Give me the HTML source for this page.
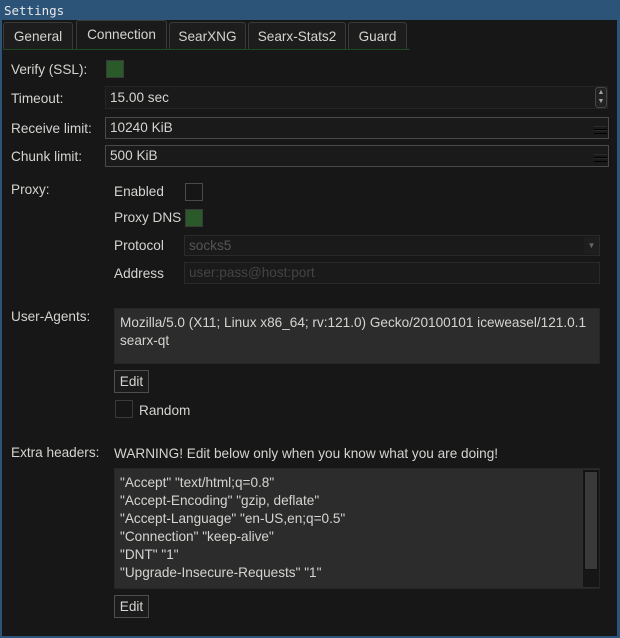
<!DOCTYPE html>
<html><head><meta charset="utf-8"><style>
*{box-sizing:border-box;margin:0;padding:0}
body{width:620px;height:638px;background:#2b5478;font-family:"Liberation Sans",sans-serif;font-size:13.6px;color:#d4d4d0;position:relative;overflow:hidden}
.a{position:absolute}
#win{position:absolute;left:2px;top:20px;width:615px;height:616px;background:#171717}
.title{left:4px;top:3px;color:#e8e8e8;font-size:12.5px;font-family:"DejaVu Sans Mono","Liberation Mono",monospace}
.tab{position:absolute;top:22px;height:27px;border:1px solid #3a3a3a;border-bottom:none;background:#1d1d1d;text-align:center;line-height:27px;border-radius:3px 3px 0 0}
.tab.act{top:20px;height:29px;background:#1a1a1a;line-height:28px}
.lbl{position:absolute;line-height:16px}
.cb{position:absolute;width:18px;height:18px;border:1px solid #4a4a4a;background:#161616}
.cb.on{background:#2a5a2a;border-color:#3a3a3a}
.fld{position:absolute;border:1px solid #4a4a4a;background:#1a1a1a;padding-left:4px;line-height:20px}
.btn{position:absolute;width:35px;height:23px;border:1px solid #4e4e4e;background:#1b1b1b;text-align:center;line-height:21px}
.ta{position:absolute;background:#2c2c2c;border:1px solid #262626}
.stub{position:absolute;width:13px;height:4px;border-bottom:1px solid #000;border-top:1px solid #2a2a2a}
</style></head><body>
<div class="a title">Settings</div>
<div id="win"></div>
<div class="a" style="left:3px;top:49px;width:407px;height:1px;background:#1f4a1f"></div>
<div class="tab" style="left:3px;width:70px">General</div>
<div class="tab act" style="left:76px;width:91px">Connection</div>
<div class="tab" style="left:169px;width:77px">SearXNG</div>
<div class="tab" style="left:248px;width:98px">Searx-Stats2</div>
<div class="tab" style="left:348px;width:59px">Guard</div>

<div class="lbl" style="left:11px;top:62px">Verify (SSL):</div>
<div class="cb on" style="left:106px;top:60px"></div>
<div class="lbl" style="left:11px;top:91px">Timeout:</div>
<div class="fld" style="left:105px;top:86px;width:503px;height:23px;border-color:#252525;line-height:22px">15.00 sec</div>
<div class="a" style="left:595px;top:87px;width:12px;height:21px;border:1px solid #444;border-radius:3px;background:#222;color:#9aa89a;font-size:7px;line-height:9px;text-align:center">▲<br>▼</div>
<div class="lbl" style="left:11px;top:121px">Receive limit:</div>
<div class="fld" style="left:105px;top:117px;width:504px;height:22px">10240 KiB</div>
<div class="stub" style="left:594px;top:126px"></div><div class="stub" style="left:594px;top:130px"></div>
<div class="lbl" style="left:11px;top:149px">Chunk limit:</div>
<div class="fld" style="left:105px;top:145px;width:504px;height:22px">500 KiB</div>
<div class="stub" style="left:594px;top:154px"></div><div class="stub" style="left:594px;top:158px"></div>

<div class="lbl" style="left:11px;top:182px">Proxy:</div>
<div class="lbl" style="left:114px;top:184px">Enabled</div>
<div class="cb" style="left:185px;top:183px"></div>
<div class="lbl" style="left:114px;top:210px">Proxy DNS</div>
<div class="cb on" style="left:185px;top:209px"></div>
<div class="lbl" style="left:114px;top:238px">Protocol</div>
<div class="fld" style="left:184px;top:235px;width:416px;height:21px;border-color:#2a2a2a;color:#555;line-height:19px">socks5</div>
<div class="a" style="left:584px;top:237px;width:15px;height:17px;background:#1e1e1e;color:#666;font-size:8px;text-align:center;line-height:17px">▼</div>
<div class="lbl" style="left:114px;top:266px">Address</div>
<div class="fld" style="left:184px;top:262px;width:416px;height:22px;border-color:#2a2a2a;color:#444">user:pass@host:port</div>

<div class="lbl" style="left:11px;top:309px">User-Agents:</div>
<div class="ta" style="left:114px;top:308px;width:486px;height:56px;padding:5px 0 0 5px;line-height:18px">Mozilla/5.0 (X11; Linux x86_64; rv:121.0) Gecko/20100101 iceweasel/121.0.1<br>searx-qt</div>
<div class="btn" style="left:114px;top:370px">Edit</div>
<div class="cb" style="left:115px;top:400px;border-color:#3a3a3a"></div>
<div class="lbl" style="left:139px;top:403px">Random</div>

<div class="lbl" style="left:11px;top:445px">Extra headers:</div>
<div class="lbl" style="left:114px;top:446px">WARNING! Edit below only when you know what you are doing!</div>
<div class="ta" style="left:114px;top:468px;width:486px;height:121px;padding:5px 0 0 5px;line-height:18px">"Accept" "text/html;q=0.8"<br>"Accept-Encoding" "gzip, deflate"<br>"Accept-Language" "en-US,en;q=0.5"<br>"Connection" "keep-alive"<br>"DNT" "1"<br>"Upgrade-Insecure-Requests" "1"</div>
<div class="a" style="left:583px;top:470px;width:16px;height:117px;background:#161616"></div>
<div class="a" style="left:584px;top:471px;width:14px;height:99px;background:#3a3a3a;border:1px solid #111"></div>
<div class="btn" style="left:114px;top:595px">Edit</div>
</body></html>
